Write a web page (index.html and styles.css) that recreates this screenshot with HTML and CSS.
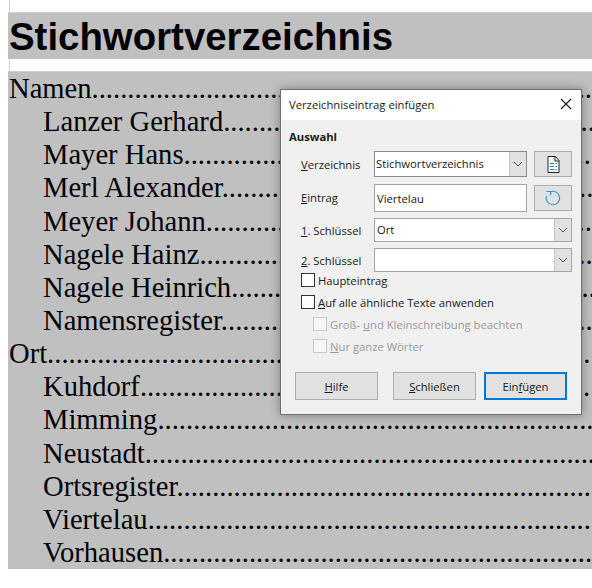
FILE: index.html
```html
<!DOCTYPE html>
<html lang="de">
<head>
    <meta charset="UTF-8">
    <meta name="viewport" content="width=device-width, initial-scale=1.0">
    <title>Stichwortverzeichnis</title>
    <link rel="stylesheet" href="styles.css">
</head>
<body>
    <div class="page">
        <h1 class="heading">Stichwortverzeichnis</h1>
        <div class="index">
            <div class="entry">Namen........................................................................................</div>
            <div class="entry sub">Lanzer Gerhard........................................................................................</div>
            <div class="entry sub">Mayer Hans........................................................................................</div>
            <div class="entry sub">Merl Alexander........................................................................................</div>
            <div class="entry sub">Meyer Johann........................................................................................</div>
            <div class="entry sub">Nagele Hainz........................................................................................</div>
            <div class="entry sub">Nagele Heinrich........................................................................................</div>
            <div class="entry sub">Namensregister........................................................................................</div>
            <div class="entry">Ort........................................................................................</div>
            <div class="entry sub">Kuhdorf........................................................................................</div>
            <div class="entry sub">Mimming........................................................................................</div>
            <div class="entry sub">Neustadt........................................................................................</div>
            <div class="entry sub">Ortsregister........................................................................................</div>
            <div class="entry sub">Viertelau........................................................................................</div>
            <div class="entry sub">Vorhausen........................................................................................</div>
        </div>
    </div>

    <div class="dialog">
        <div class="titlebar">
            <span>Verzeichniseintrag einfügen</span>
            <svg class="close" width="12" height="12" viewBox="0 0 12 12"><path d="M1 1l10 10M11 1L1 11" stroke="#1a1a1a" stroke-width="1.1" fill="none"/></svg>
        </div>
        <div class="content">
            <div class="section-title">Auswahl</div>
            <div class="form">
                <label class="row-label"><u>V</u>erzeichnis</label>
                <div class="combo combo-main">
                    <span class="combo-value">Stichwortverzeichnis</span>
                    <span class="combo-arrow"><svg width="10" height="6" viewBox="0 0 10 6"><path d="M1 1l4 4 4-4" stroke="#555" fill="none"/></svg></span>
                </div>
                <button class="icon-btn">
                    <svg width="13" height="17" viewBox="0 0 13 17">
                        <path d="M1 .5h7.500l3.500 4v12h-11z" fill="#fff" stroke="#222"/>
                        <path d="M8 .5v4.500h4" fill="none" stroke="#222"/>
                        <path d="M3 7.500h4M3 10.500h4M3 13.500h4" stroke="#1b86d0"/>
                        <path d="M8.500 7.500h1.500M8.500 10.500h1.500M8.500 13.500h1.500" stroke="#1b86d0"/>
                    </svg>
                </button>

                <label class="row-label"><u>E</u>intrag</label>
                <input class="text-input" type="text" value="Viertelau">
                <button class="icon-btn">
                    <svg width="16" height="16" viewBox="0 0 16 16">
                        <path d="M5.200 1.900A6.700 6.700 0 1 1 1.500 6" fill="none" stroke="#2f94d8" stroke-width="1.100"/>
                        <path d="M1.200 1.500h4.400v3.800" fill="none" stroke="#2f94d8" stroke-width="1.100"/>
                    </svg>
                </button>

                <label class="row-label"><u>1</u>. Schlüssel</label>
                <div class="combo combo-wide">
                    <span class="combo-value">Ort</span>
                    <span class="combo-arrow"><svg width="10" height="6" viewBox="0 0 10 6"><path d="M1 1l4 4 4-4" stroke="#555" fill="none"/></svg></span>
                </div>

                <label class="row-label"><u>2</u>. Schlüssel</label>
                <div class="combo combo-wide">
                    <span class="combo-value"></span>
                    <span class="combo-arrow"><svg width="10" height="6" viewBox="0 0 10 6"><path d="M1 1l4 4 4-4" stroke="#555" fill="none"/></svg></span>
                </div>
            </div>

            <div class="checks">
                <div class="check"><span class="box"></span><span>Haupteintra<u>g</u></span></div>
                <div class="check"><span class="box"></span><span><u>A</u>uf alle ähnliche Texte anwenden</span></div>
                <div class="check disabled"><span class="box"></span><span>Groß- <u>u</u>nd Kleinschreibung beachten</span></div>
                <div class="check disabled"><span class="box"></span><span><u>N</u>ur ganze Wörter</span></div>
            </div>

            <div class="buttons">
                <button class="btn"><u>H</u>ilfe</button>
                <button class="btn btn-close"><u>S</u>chließen</button>
                <button class="btn btn-default">Ein<u>f</u>ügen</button>
            </div>
        </div>
    </div>
</body>
</html>
```

FILE: styles.css
```css
html, body {
    margin: 0;
    height: 588px;
    overflow: hidden;
    background-color: #fff;
}
.page {
    margin-left: 9px;
    height: 569px;
    padding-top: 12px;
    box-sizing: border-box;
    border-left: 1px solid #d4d4d4;
}
.heading {
    margin: 0 0 12px -2px;
    height: 47px;
    padding-left: 1px;
    background-color: #c0c0c0;
    font-family: "Liberation Sans", Arial, sans-serif;
    font-size: 38.4px;
    line-height: 47px;
    font-weight: bold;
    color: #000;
    border-top: 1px solid #d0d0d0;
    box-sizing: border-box;
}
.index {
    margin-left: -2px;
    height: 498px;
    box-sizing: border-box;
    overflow: hidden;
    background-color: #c0c0c0;
    border-top: 1px solid #d0d0d0;
    font-family: "Liberation Serif", "Times New Roman", serif;
    font-size: 28.6px;
    color: #000;
}
.entry {
    height: 33.150px;
    line-height: 33.150px;
    padding-left: 1px;
    white-space: nowrap;
    overflow: hidden;
}
.sub {
    padding-left: 35px;
}

/* dialog floats over the document */
.dialog {
    position: absolute;
    left: 280px;
    top: 89px;
    width: 302px;
    height: 326px;
    box-sizing: border-box;
    border: 1px solid #6f6f6f;
    background-color: #f0f0f0;
    box-shadow: 0 0 10px rgba(0, 0, 0, 0.35);
    font-family: "Open Sans", "Noto Sans", sans-serif;
    font-size: 11.25px;
    color: #1a1a1a;
}
.titlebar {
    height: 30px;
    box-sizing: border-box;
    padding: 0 9px 2px 8px;
    display: flex;
    align-items: center;
    justify-content: space-between;
    background-color: #fff;
}
.content {
    padding: 9px 9px 0 8px;
}
.section-title {
    font-weight: bold;
    height: 16px;
    line-height: 16px;
}
.form {
    margin-top: 6px;
    margin-left: 12px;
    display: grid;
    grid-template-columns: 73px 153px 45px;
    row-gap: 6px;
    align-items: center;
}
.row-label {
    white-space: nowrap;
}
.combo {
    display: flex;
    box-sizing: border-box;
    background-color: #fff;
    border: 1px solid #a5a5a5;
}
.combo-main {
    height: 26px;
    border: 1px solid #8a8a96;
}
.combo-wide {
    grid-column: 2 / 4;
    width: 198px;
    height: 24px;
}
.combo-value {
    flex: 1;
    padding-left: 1px;
    line-height: 24px;
}
.combo-wide .combo-value {
    padding-left: 2px;
    line-height: 22px;
}
.combo-arrow {
    width: 16px;
    display: flex;
    align-items: center;
    justify-content: center;
    background-color: #e1e1e1;
    border-left: 1px solid #c4c4c4;
}
.icon-btn {
    margin-left: 7px;
    width: 38px;
    height: 26px;
    padding: 0;
    box-sizing: border-box;
    display: flex;
    align-items: center;
    justify-content: center;
    background-color: #e1e1e1;
    border: 1px solid #adadad;
}
.text-input {
    width: 153px;
    height: 28px;
    margin-top: 1px;
    padding: 0 2px;
    box-sizing: border-box;
    background-color: #fff;
    border: 1px solid #a5a5a5;
    border-radius: 0;
    font: inherit;
    color: inherit;
}
.checks {
    margin-top: -3px;
    margin-left: 12px;
}
.check {
    height: 22px;
    display: flex;
    align-items: center;
    white-space: nowrap;
}
.box {
    width: 12px;
    height: 12px;
    margin-right: 3px;
    flex: none;
    background-color: #fff;
    border: 1px solid #333;
}
.disabled {
    margin-left: 12px;
    color: #9a9a9a;
}
.disabled .box {
    border-color: #c8c8c8;
    background-color: #f5f5f5;
}
.buttons {
    margin-top: 15px;
    margin-left: 6px;
    display: flex;
}
.btn {
    width: 83px;
    height: 28px;
    padding: 0;
    box-sizing: border-box;
    background-color: #e1e1e1;
    border: 1px solid #adadad;
    border-radius: 0;
    font: inherit;
    color: inherit;
}
.btn-close {
    margin-left: 15px;
}
.btn-default {
    margin-left: 8px;
    border: 2px solid #0078d7;
}
```
